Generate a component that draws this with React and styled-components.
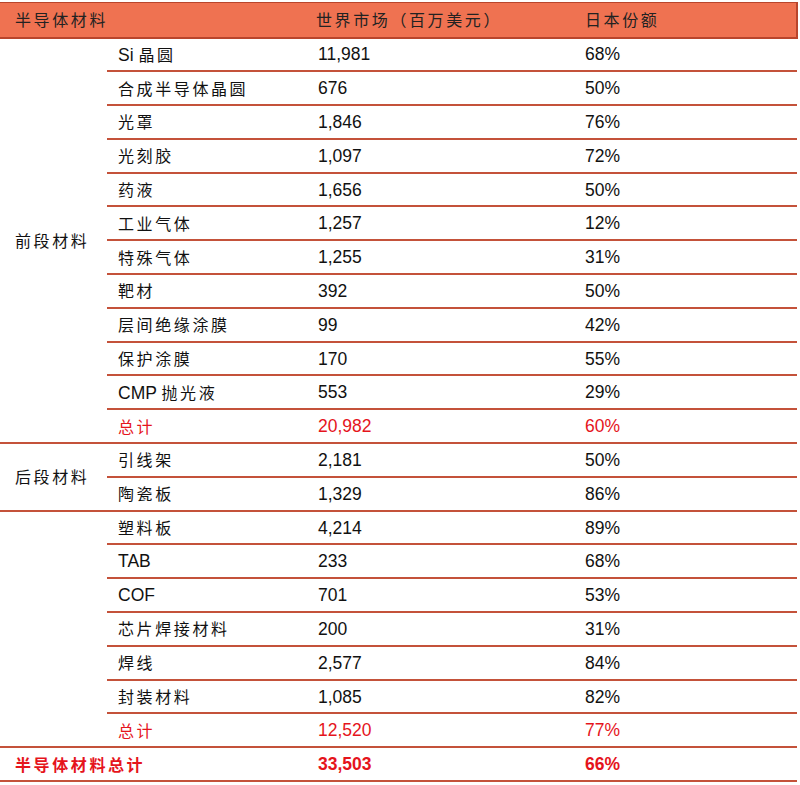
import React from 'react'
import styled, { createGlobalStyle } from 'styled-components'

// 半导体材料 市场份额 表

const Global = createGlobalStyle`
    body {
        margin:0;
        background:#fff;
        font-family: "Liberation Sans", Arial, "Noto Sans CJK SC", sans-serif;
        color:#111;
    }
`

const LINE = '#C4523A'
const DARK = '#B9452C'

const Wrapper = styled.div`
    width:797px;
    padding-top:2px;
`

const Table = styled.table`
    width:797px;
    border-collapse: collapse;
    table-layout: fixed;
`

const Col = styled.col`
    width:${p => p.$w}px;
`

const Head = styled.tr`
    height:35px;
    background:#EF7251;
`

const HeadCell = styled.th`
    border-top:1px solid ${DARK};
    border-bottom:2px solid ${DARK};
    font-weight:normal;
    text-align:left;
    padding:0 0 0 ${p => p.$pad || 0}px;
    color:#222;
    white-space: nowrap;

    &:last-child {
        border-right:2px solid ${DARK};
    }
`

const Row = styled.tr`
    height:33.8px;
`

const Cell = styled.td`
    padding:0 0 0 ${p => p.$pad}px;
    border-bottom:2px solid ${LINE};
    color:${p => (p.$red ? '#E5141C' : '#111')};
    font-weight:${p => (p.$bold ? 'bold' : 'normal')};
    font-size:17.5px;
    line-height:20px;
    vertical-align: middle;
    white-space: nowrap;
`

const GroupCell = styled.td`
    padding:0 0 0 15px;
    border-bottom:2px solid ${LINE};
    vertical-align: middle;
    white-space: nowrap;
`

const Cjk = styled.span`
    font-family: "Noto Sans CJK SC", sans-serif;
    font-size:16px;
    line-height:20px;
    letter-spacing:2.6px;
    font-weight:${p => (p.$bold ? 'bold' : 'normal')};
`

// 中文与拉丁字母分开排
const Text = ({ children, bold }) =>
    children.split(/([\u3000-\u9fff\uff00-\uffef]+)/).filter(Boolean).map((s, i) =>
        /[\u3000-\u9fff\uff00-\uffef]/.test(s)
            ? <Cjk key={i} $bold={bold}>{s}</Cjk>
            : <span key={i}>{s}</span>
    )

const groups = [
    {
        label: '前段材料',
        rows: [
            ['Si 晶圆', '11,981', '68%'],
            ['合成半导体晶圆', '676', '50%'],
            ['光罩', '1,846', '76%'],
            ['光刻胶', '1,097', '72%'],
            ['药液', '1,656', '50%'],
            ['工业气体', '1,257', '12%'],
            ['特殊气体', '1,255', '31%'],
            ['靶材', '392', '50%'],
            ['层间绝缘涂膜', '99', '42%'],
            ['保护涂膜', '170', '55%'],
            ['CMP 抛光液', '553', '29%'],
            ['总计', '20,982', '60%', true],
        ],
    },
    {
        label: '后段材料',
        rows: [
            ['引线架', '2,181', '50%'],
            ['陶瓷板', '1,329', '86%'],
        ],
    },
    {
        label: '',
        rows: [
            ['塑料板', '4,214', '89%'],
            ['TAB', '233', '68%'],
            ['COF', '701', '53%'],
            ['芯片焊接材料', '200', '31%'],
            ['焊线', '2,577', '84%'],
            ['封装材料', '1,085', '82%'],
            ['总计', '12,520', '77%', true],
        ],
    },
]

export default function App() {
    return (
        <Wrapper>
            <Global />
            <Table>
                <colgroup>
                    <Col $w={107} />
                    <Col $w={198} />
                    <Col $w={268} />
                    <Col $w={224} />
                </colgroup>
                <thead>
                    <Head>
                        <HeadCell $pad={15} colSpan={2}><Text>半导体材料</Text></HeadCell>
                        <HeadCell $pad={11}><Text>世界市场（百万美元）</Text></HeadCell>
                        <HeadCell $pad={12}><Text>日本份额</Text></HeadCell>
                    </Head>
                </thead>
                <tbody>
                    {groups.map(g =>
                        g.rows.map(([name, value, share, red], i) => (
                            <Row key={g.label + name}>
                                {i === 0 && (
                                    <GroupCell rowSpan={g.rows.length}>
                                        <Text>{g.label}</Text>
                                    </GroupCell>
                                )}
                                <Cell $pad={11} $red={red}><Text>{name}</Text></Cell>
                                <Cell $pad={13} $red={red}>{value}</Cell>
                                <Cell $pad={12} $red={red}>{share}</Cell>
                            </Row>
                        ))
                    )}
                    <Row>
                        <Cell $pad={15} $red $bold colSpan={2}><Text bold>半导体材料总计</Text></Cell>
                        <Cell $pad={13} $red $bold>33,503</Cell>
                        <Cell $pad={12} $red $bold>66%</Cell>
                    </Row>
                </tbody>
            </Table>
        </Wrapper>
    )
}
